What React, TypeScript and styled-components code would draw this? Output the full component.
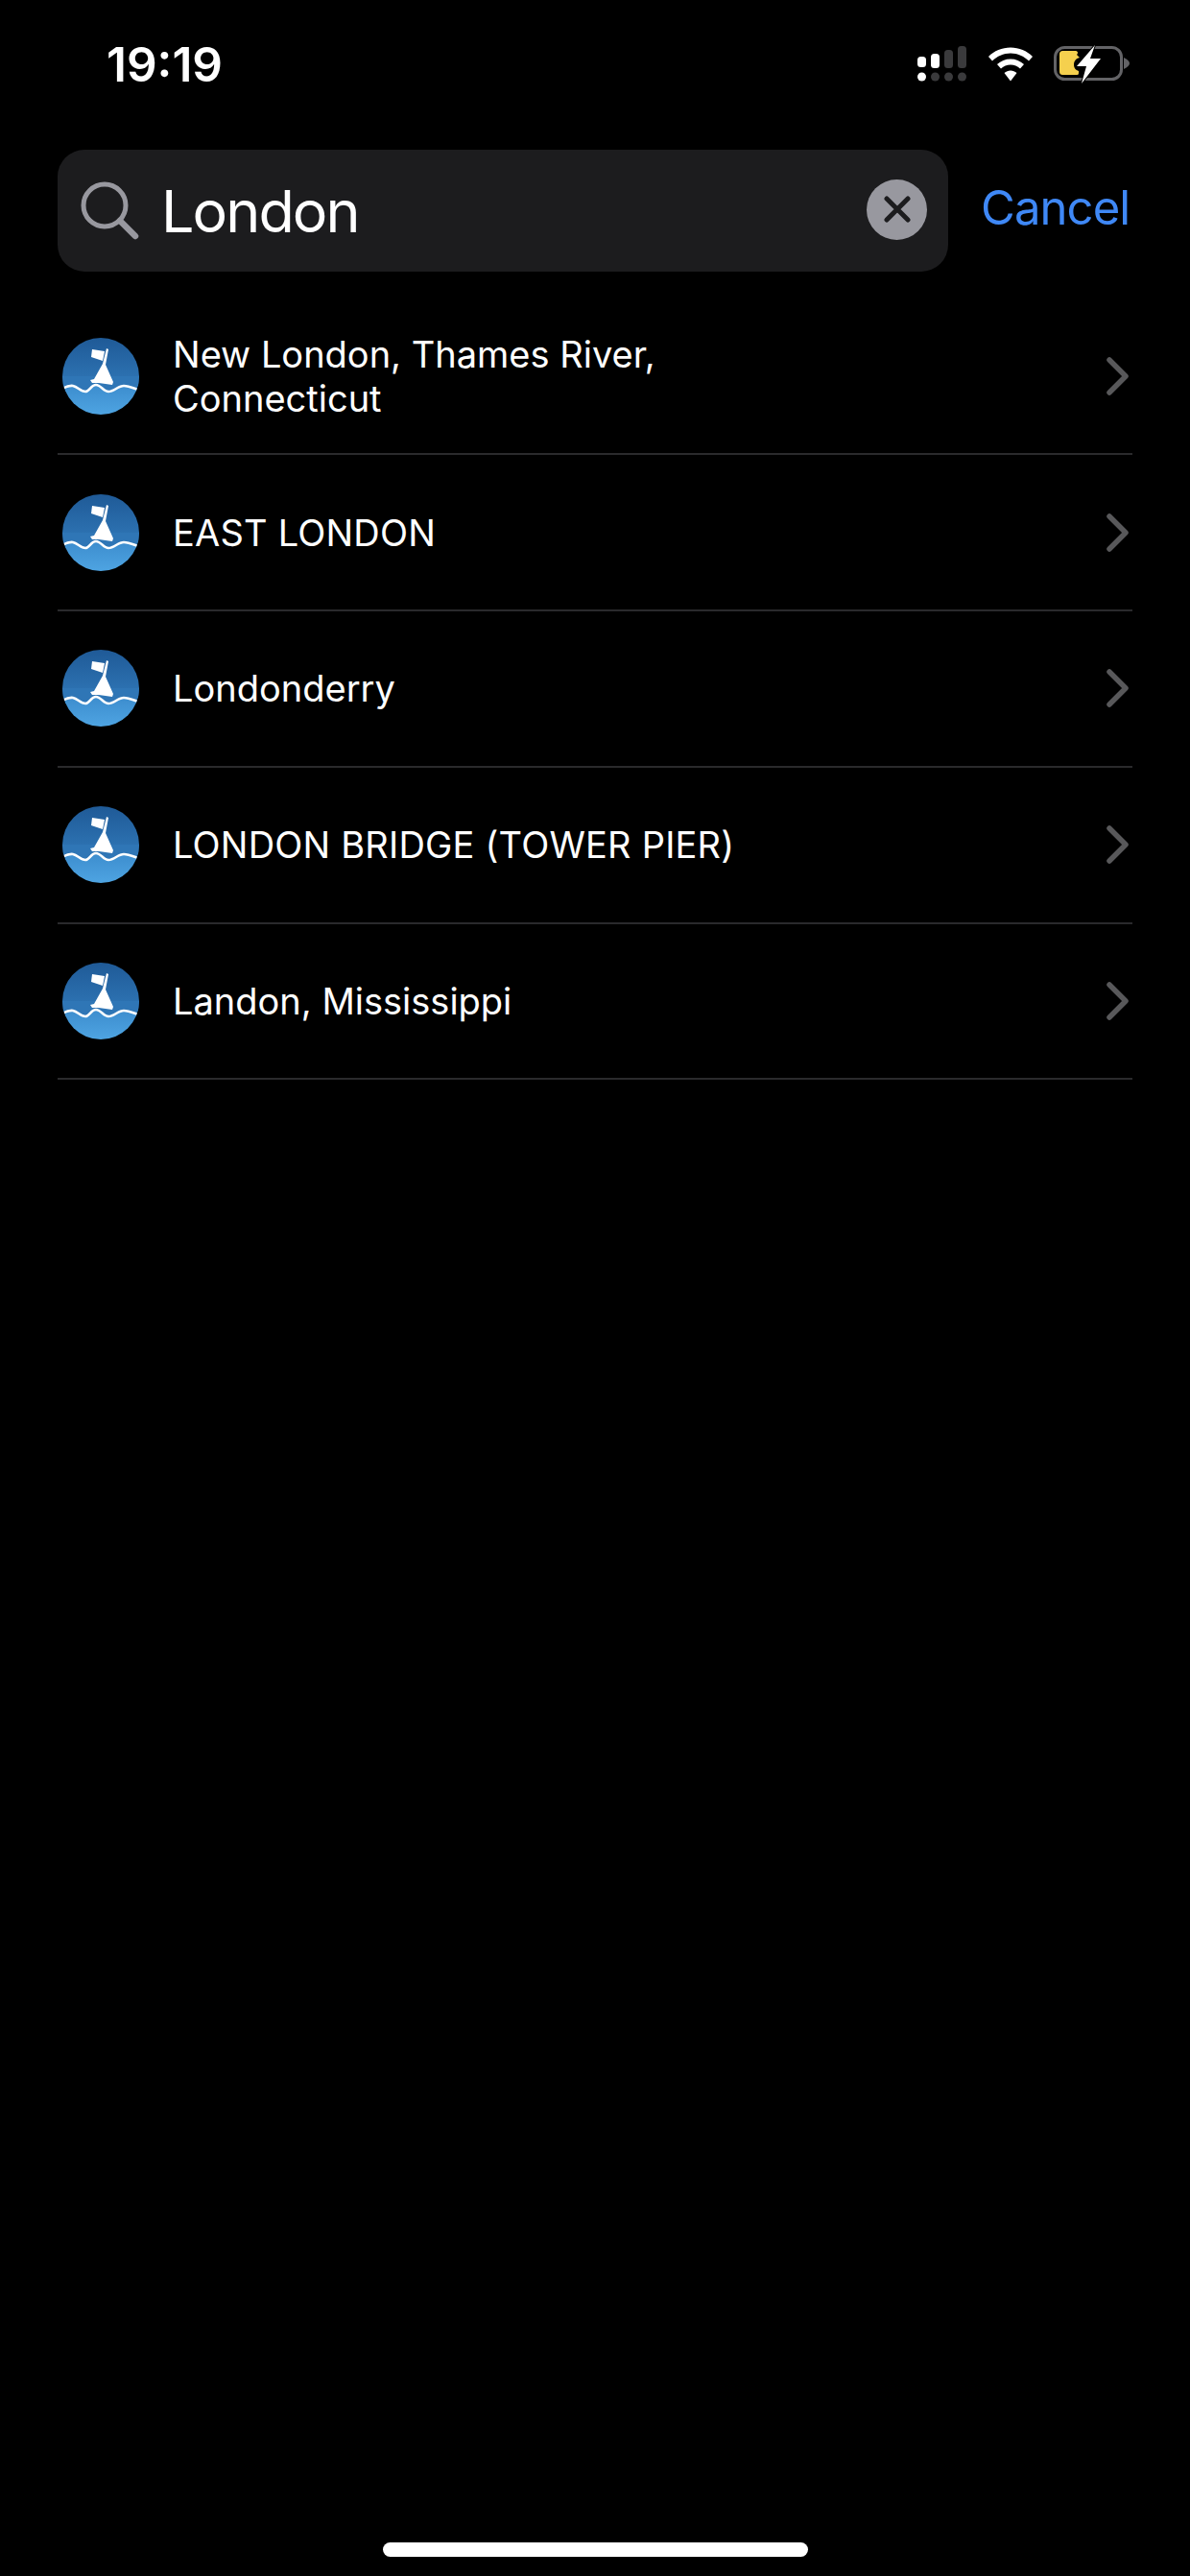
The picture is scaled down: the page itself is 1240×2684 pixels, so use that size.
import React from 'react'
import styled, { createGlobalStyle } from 'styled-components'

const Global = createGlobalStyle`
  html, body { margin: 0; padding: 0; background: #000; }
  * { box-sizing: border-box; }
`

const RESULTS = [
  ['New London, Thames River,', 'Connecticut'],
  ['EAST LONDON'],
  ['Londonderry'],
  ['LONDON BRIDGE (TOWER PIER)'],
  ['Landon, Mississippi']
]

function BuoyIcon({ id }: { id: number }) {
  const wave = 'M-2 54 C3 51 7 49.500 11 50 C16 51 19 56 24 56 C28 56 30 49 35 49 C40 49 43 56 48 56 C54 56 58 50 64 50 C69 50 73 52 82 55'
  return (
    <svg width="80" height="80" viewBox="0 0 80 80">
      <defs>
        <linearGradient id={`sky${id}`} x1="0" y1="0" x2="0" y2="1">
          <stop offset="0" stopColor="#1f5a97" />
          <stop offset="1" stopColor="#2f76b6" />
        </linearGradient>
        <linearGradient id={`sea${id}`} x1="0" y1="0" x2="0" y2="1">
          <stop offset="0" stopColor="#3c8ccd" />
          <stop offset="1" stopColor="#4ea4e2" />
        </linearGradient>
        <clipPath id={`disc${id}`}>
          <circle cx="40" cy="40" r="40" />
        </clipPath>
      </defs>
      <g clipPath={`url(#disc${id})`}>
        <rect width="80" height="50" fill={`url(#sky${id})`} />
        <rect y="48" width="80" height="32" fill={`url(#sea${id})`} />
        <path d={`${wave} L82 40 L-2 40Z`} fill="#2f76b6" />
        <path d="M31 12 L44 14 L42 24 L30 20Z" fill="#fff" />
        <path d="M46 11 L48 12 L45 28 L53 46 L52 49 L38 47 L31 47 L29 44 L33 43 L42 27Z" fill="#fff" />
        <path d={wave} fill="none" stroke="#fff" strokeWidth="2.600" />
      </g>
    </svg>
  )
}

export default function App() {
  return (
    <S.Page>
      <Global />
      <S.StatusBar>
        <S.Time>19:19</S.Time>
        <S.StatusIcons>
          <svg width="52" height="38" viewBox="0 0 52 38">
            <rect x="0" y="11" width="9" height="11" rx="3.500" fill="#fff" />
            <rect x="14" y="8" width="9" height="15" rx="3.500" fill="#fff" />
            <rect x="28" y="4" width="9" height="19" rx="3.500" fill="#3a3a3c" />
            <rect x="42" y="0" width="9" height="23" rx="3.500" fill="#3a3a3c" />
            <circle cx="4.500" cy="32" r="4.500" fill="#fff" />
            <circle cx="18.500" cy="32" r="4.500" fill="#3a3a3c" />
            <circle cx="32.500" cy="32" r="4.500" fill="#3a3a3c" />
            <circle cx="46.500" cy="32" r="4.500" fill="#3a3a3c" />
          </svg>
          <svg width="48" height="37" viewBox="0 0 48 36">
            <path d="M24 0 C33 0 41 3.500 47 9.500 L43 14 C38 9 31.500 6 24 6 C16.500 6 10 9 5 14 L1 9.500 C7 3.500 15 0 24 0Z" fill="#fff" />
            <path d="M24 12 C29.500 12 34 14 38 17.500 L34 22 C31 19.500 28 18 24 18 C20 18 17 19.500 14 22 L10 17.500 C14 14 18.500 12 24 12Z" fill="#fff" />
            <path d="M24 24 C26.500 24 28.500 25 30.500 26.500 L24 35 L17.500 26.500 C19.500 25 21.500 24 24 24Z" fill="#fff" />
          </svg>
          <svg width="80" height="40" viewBox="0 0 80 40">
            <rect x="1.500" y="2.500" width="69" height="33" rx="10" fill="none" stroke="#636366" strokeWidth="3" />
            <path d="M73 13 C77 15 79 17 79 19 C79 21 77 23 73 25Z" fill="#636366" />
            <path d="M10 6 H22 C25 6 26 8 24 10 L27 13 C23 14 21 17 21 20 C21 24 23 26 26 27 V29 C26 31 25 31 23 31 H10 C7 31 6 30 6 27 V10 C6 7 7 6 10 6Z" fill="#f5d04e" />
            <path d="M43 0 L24 22 H34 L29 40 L49 14 H38 Z" fill="#fff" stroke="#000" strokeWidth="2" paintOrder="stroke" />
          </svg>
        </S.StatusIcons>
      </S.StatusBar>

      <S.SearchRow>
        <S.SearchBox>
          <svg width="62" height="62" viewBox="0 0 62 62">
            <circle cx="25" cy="25" r="22" fill="none" stroke="#98989f" strokeWidth="5" />
            <path d="M41 41 L57 57" stroke="#98989f" strokeWidth="6.500" strokeLinecap="round" />
          </svg>
          <S.Query>London</S.Query>
          <S.Clear>
            <svg width="28" height="28" viewBox="0 0 28 28">
              <path d="M3 3 L25 25 M25 3 L3 25" stroke="#1c1c1e" strokeWidth="5" strokeLinecap="round" />
            </svg>
          </S.Clear>
        </S.SearchBox>
        <S.Cancel>Cancel</S.Cancel>
      </S.SearchRow>

      <S.List>
        {RESULTS.map((lines, i) => (
          <S.Row key={i}>
            <BuoyIcon id={i} />
            <S.Label $caps={lines[0] === lines[0].toUpperCase()}>
              {lines.map(l => <div key={l}>{l}</div>)}
            </S.Label>
            <svg width="24" height="40" viewBox="0 0 24 40">
              <path d="M3 3 L20 20 L3 37" fill="none" stroke="#58585a" strokeWidth="5.500" strokeLinecap="round" strokeLinejoin="round" />
            </svg>
          </S.Row>
        ))}
      </S.List>

      <S.HomeBar />
    </S.Page>
  )
}

const S = {
  Page: styled.div`
    position: relative;
    width: 1240px;
    height: 2684px;
    background: #000;
    color: #fff;
    font-family: Inter, 'Liberation Sans', sans-serif;
    overflow: hidden;
`,

  StatusBar: styled.div`
    height: 156px;
    padding: 43px 62px 0 111px;
    display: flex;
    justify-content: space-between;
    align-items: flex-start;
`,

  Time: styled.div`
    font-size: 49.5px;
    line-height: 48px;
    font-weight: 600;
`,

  StatusIcons: styled.div`
    display: flex;
    align-items: center;
    gap: 21px;
    padding-top: 4px;
`,

  SearchRow: styled.div`
    display: flex;
    align-items: center;
    padding: 0 64px 0 60px;
    gap: 34px;
`,

  SearchBox: styled.div`
    flex: 1;
    height: 127px;
    background: #1c1c1e;
    border-radius: 28px;
    display: flex;
    align-items: center;
    padding: 0 22px 0 24px;
`,

  Query: styled.div`
    flex: 1;
    margin-left: 22px;
    font-size: 61px;
    line-height: 70px;
    letter-spacing: -1.9px;
`,

  Clear: styled.div`
    width: 63px;
    height: 63px;
    margin-top: -3px;
    border-radius: 50%;
    background: #98989f;
    display: flex;
    align-items: center;
    justify-content: center;
`,

  Cancel: styled.div`
    width: 154px;
    margin-top: -6px;
    font-size: 49px;
    line-height: 60px;
    letter-spacing: -0.9px;
    white-space: nowrap;
    color: #3f88f6;
`,

  List: styled.div`
    margin: 28.5px 60px 0 60px;
`,

  Row: styled.div`
    display: flex;
    align-items: center;
    height: 162.75px;
    padding: 1px 3px 1px 5px;
    border-bottom: 2px solid #2a2a2c;
`,

  Label: styled.div<{ $caps: boolean }>`
    flex: 1;
    margin-left: 35px;
    font-size: 38px;
    line-height: 46px;
    letter-spacing: ${({ $caps }) => $caps ? '0.2px' : '0'};
`,

  HomeBar: styled.div`
    position: absolute;
    left: 399px;
    top: 2649px;
    width: 443px;
    height: 15px;
    border-radius: 8px;
    background: #fff;
`
}
